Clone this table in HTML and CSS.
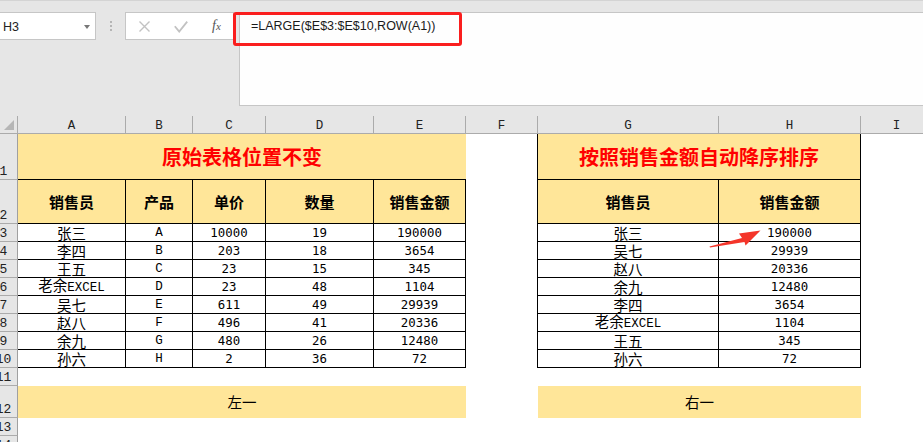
FILE: index.html
```html
<!DOCTYPE html>
<html lang="zh">
<head>
<meta charset="utf-8">
<title>LARGE 排序</title>
<link rel="stylesheet" href="styles.css">
</head>
<body>
<div class="topbar">
  <div class="namebox"><span class="nb-text">H3</span><span class="caret"></span></div>
  <div class="grip"><i></i><i></i><i></i></div>
  <div class="fbtns">
    <svg class="ic-x" width="11" height="11" viewBox="0 0 11 11"><path d="M0.5 0.5L10.5 10.5M10.5 0.5L0.5 10.5" stroke="#c2c2c2" stroke-width="1.4" fill="none"/></svg>
    <svg class="ic-ok" width="14" height="12" viewBox="0 0 14 12"><path d="M0.8 5.2L5.2 10.6L13.2 0.6" stroke="#c2c2c2" stroke-width="1.8" fill="none"/></svg>
    <span class="fx">f<span class="fx-x">x</span></span>
  </div>
  <div class="finput">=LARGE($E$3:$E$10,ROW(A1))</div>
  <div class="redbox"></div>
</div>

<div class="sheet">
  <!-- column headers -->
  <div class="ch corner"><span class="tri"></span></div>
  <div class="ch">A</div><div class="ch">B</div><div class="ch">C</div><div class="ch">D</div><div class="ch">E</div><div class="ch">F</div><div class="ch">G</div><div class="ch">H</div><div class="ch">I</div>

  <!-- row 1 -->
  <div class="rh"><span>1</span></div>
  <div class="c y bb title span5"><span>原始表格位置不变</span></div>
  <div class="c eb"></div>
  <div class="c y t title span2"><span>按照销售金额自动降序排序</span></div>
  <div class="c"></div>

  <!-- row 2 -->
  <div class="rh"><span>2</span></div>
  <div class="c y t hd"><span>销售员</span></div><div class="c y t hd"><span>产品</span></div><div class="c y t hd"><span>单价</span></div><div class="c y t hd"><span>数量</span></div><div class="c y t hd"><span>销售金额</span></div>
  <div class="c eb"></div>
  <div class="c y t hd"><span>销售员</span></div><div class="c y t hd"><span>销售金额</span></div>
  <div class="c"></div>

  <!-- row 3 -->
  <div class="rh"><span>3</span></div>
  <div class="c t zh"><span>张三</span></div><div class="c t lt"><span>A</span></div><div class="c t n"><span>10000</span></div><div class="c t n"><span>19</span></div><div class="c t n"><span>190000</span></div>
  <div class="c eb"></div>
  <div class="c t zh"><span>张三</span></div><div class="c t n"><span>190000</span></div>
  <div class="c"></div>

  <!-- row 4 -->
  <div class="rh"><span>4</span></div>
  <div class="c t zh"><span>李四</span></div><div class="c t lt"><span>B</span></div><div class="c t n"><span>203</span></div><div class="c t n"><span>18</span></div><div class="c t n"><span>3654</span></div>
  <div class="c eb"></div>
  <div class="c t zh"><span>吴七</span></div><div class="c t n"><span>29939</span></div>
  <div class="c"></div>

  <!-- row 5 -->
  <div class="rh"><span>5</span></div>
  <div class="c t zh"><span>王五</span></div><div class="c t lt"><span>C</span></div><div class="c t n"><span>23</span></div><div class="c t n"><span>15</span></div><div class="c t n"><span>345</span></div>
  <div class="c eb"></div>
  <div class="c t zh"><span>赵八</span></div><div class="c t n"><span>20336</span></div>
  <div class="c"></div>

  <!-- row 6 -->
  <div class="rh"><span>6</span></div>
  <div class="c t zh"><span>老余<span class="lt">EXCEL</span></span></div><div class="c t lt"><span>D</span></div><div class="c t n"><span>23</span></div><div class="c t n"><span>48</span></div><div class="c t n"><span>1104</span></div>
  <div class="c eb"></div>
  <div class="c t zh"><span>余九</span></div><div class="c t n"><span>12480</span></div>
  <div class="c"></div>

  <!-- row 7 -->
  <div class="rh"><span>7</span></div>
  <div class="c t zh"><span>吴七</span></div><div class="c t lt"><span>E</span></div><div class="c t n"><span>611</span></div><div class="c t n"><span>49</span></div><div class="c t n"><span>29939</span></div>
  <div class="c eb"></div>
  <div class="c t zh"><span>李四</span></div><div class="c t n"><span>3654</span></div>
  <div class="c"></div>

  <!-- row 8 -->
  <div class="rh"><span>8</span></div>
  <div class="c t zh"><span>赵八</span></div><div class="c t lt"><span>F</span></div><div class="c t n"><span>496</span></div><div class="c t n"><span>41</span></div><div class="c t n"><span>20336</span></div>
  <div class="c eb"></div>
  <div class="c t zh"><span>老余<span class="lt">EXCEL</span></span></div><div class="c t n"><span>1104</span></div>
  <div class="c"></div>

  <!-- row 9 -->
  <div class="rh"><span>9</span></div>
  <div class="c t zh"><span>余九</span></div><div class="c t lt"><span>G</span></div><div class="c t n"><span>480</span></div><div class="c t n"><span>26</span></div><div class="c t n"><span>12480</span></div>
  <div class="c eb"></div>
  <div class="c t zh"><span>王五</span></div><div class="c t n"><span>345</span></div>
  <div class="c"></div>

  <!-- row 10 -->
  <div class="rh"><span>10</span></div>
  <div class="c t zh"><span>孙六</span></div><div class="c t lt"><span>H</span></div><div class="c t n"><span>2</span></div><div class="c t n"><span>36</span></div><div class="c t n"><span>72</span></div>
  <div class="c eb"></div>
  <div class="c t zh"><span>孙六</span></div><div class="c t n"><span>72</span></div>
  <div class="c"></div>

  <!-- row 11 -->
  <div class="rh"><span>11</span></div>
  <div class="c span9"></div>

  <!-- row 12 -->
  <div class="rh"><span>12</span></div>
  <div class="c y zh span5"><span>左一</span></div>
  <div class="c"></div>
  <div class="c y zh span2"><span>右一</span></div>
  <div class="c"></div>

  <!-- row 13 -->
  <div class="rh"><span>13</span></div>
  <div class="c span9"></div>

  <!-- row 14 -->
  <div class="rh"><span>14</span></div>
  <div class="c span9"></div>

  <svg class="arrow" width="60" height="22" viewBox="0 0 60 22"><polygon points="4.5,18.5 37,10 34,5.5 55.5,2.5 40.5,17.5 39.5,14 5,19.5" fill="#f4352a"/></svg>
</div>
</body>
</html>
```

FILE: styles.css
```css
* { box-sizing: border-box; }
html, body { margin: 0; padding: 0; overflow: hidden; }
body {
  width: 923px;
  height: 442px;
  background: #ffffff;
  font-family: "Liberation Sans", "Noto Sans CJK SC", sans-serif;
  color: #000;
}

/* ---------- formula bar area ---------- */
.topbar {
  position: relative;
  height: 116px;
  background: #e6e6e6;
  border-top: 1px solid #d4d4d4;
  padding-top: 11px;
  display: flex;
  align-items: flex-start;
}
.namebox {
  margin-left: -1px;
  width: 97px;
  height: 28px;
  background: #fff;
  border: 1px solid #c6c6c6;
  display: flex;
  align-items: center;
  justify-content: space-between;
  padding: 1px 5px 0 3px;
  font-size: 12.5px;
  color: #222;
}
.caret {
  width: 0;
  height: 0;
  border-left: 3.5px solid transparent;
  border-right: 3.5px solid transparent;
  border-top: 4px solid #777;
}
.grip {
  width: 29px;
  height: 28px;
  display: flex;
  flex-direction: column;
  align-items: center;
  gap: 2px;
  padding-top: 9px;
}
.grip i {
  display: block;
  width: 2px;
  height: 2px;
  background: #b5b5b5;
}
.fbtns {
  width: 109px;
  height: 28px;
  margin-right: 5px;
  background: #fff;
  border: 1px solid #c6c6c6;
  display: flex;
  align-items: center;
  padding-left: 13px;
}
.ic-ok { margin-left: 24px; margin-top: 1px; }
.fx {
  margin-left: 24px;
  font-family: "Liberation Serif", serif;
  font-style: italic;
  font-size: 14px;
  color: #555;
  line-height: 1;
}
.fx-x { font-size: 11px; }
.finput {
  flex: 1;
  height: 94px;
  background: #fefefe;
  border: 1px solid #c6c6c6;
  border-right: none;
  padding: 5px 0 0 11px;
  font-size: 12.5px;
  line-height: 16px;
  color: #1a1a1a;
}
.redbox {
  position: absolute;
  left: 233px;
  top: 11px;
  width: 229px;
  height: 34px;
  border: 3px solid #fa1e1e;
  border-radius: 3px;
}

/* ---------- sheet grid ---------- */
.sheet {
  position: relative;
  display: grid;
  grid-template-columns: 18px 108px 67px 73px 108px 92px 72px 181px 142px 72px;
  grid-template-rows: 18px 46px 44px repeat(9, 18px) 32px 18px 18px;
  width: max-content;
}
.ch {
  background: #e6e6e6;
  border-right: 1px solid #ababab;
  border-bottom: 1px solid #ababab;
  display: flex;
  align-items: center;
  justify-content: center;
  padding-top: 2px;
  font-family: "Liberation Mono", monospace;
  font-size: 12.5px;
  color: #222;
}
.corner { position: relative; }
.tri {
  position: absolute;
  right: 3px;
  bottom: 3px;
  width: 0;
  height: 0;
  border-left: 10px solid transparent;
  border-bottom: 10px solid #b6b6b6;
}
.rh {
  background: #e6e6e6;
  border-right: 1px solid #a0a0a0;
  border-bottom: 1px solid #ababab;
  overflow: hidden;
  display: flex;
  align-items: flex-end;
  justify-content: center;
  padding-right: 10px;
  font-family: "Liberation Mono", monospace;
  font-size: 13px;
  line-height: 15px;
  color: #222;
}
.rh span { white-space: nowrap; flex: none; }

.c {
  display: flex;
  align-items: center;
  justify-content: center;
  white-space: nowrap;
}
.c > span { flex: none; }
.span5 { grid-column: span 5; }
.span2 { grid-column: span 2; }
.span9 { grid-column: span 9; }
.y { background: #ffe699; }
.t { border-right: 1px solid #000; border-bottom: 1px solid #000; }
.bb { border-bottom: 1px solid #000; }
.eb { border-right: 1px solid #000; }

.title {
  font-family: "Noto Sans CJK SC", sans-serif;
  font-weight: 700;
  font-size: 20px;
  line-height: 24px;
  color: #ff0000;
}
.hd {
  font-family: "Noto Sans CJK SC", sans-serif;
  font-weight: 700;
  font-size: 15px;
  line-height: 18px;
}
.zh {
  font-family: "Noto Sans CJK SC", sans-serif;
  font-size: 14.5px;
  line-height: 16px;
}
.n {
  font-family: "DejaVu Sans Mono", monospace;
  font-size: 12.4px;
  line-height: 16px;
  padding-top: 1px;
}
.lt {
  font-family: "Liberation Mono", monospace;
  font-size: 12.5px;
  line-height: 16px;
}

.arrow {
  position: absolute;
  left: 705px;
  top: 112px;
}
```
